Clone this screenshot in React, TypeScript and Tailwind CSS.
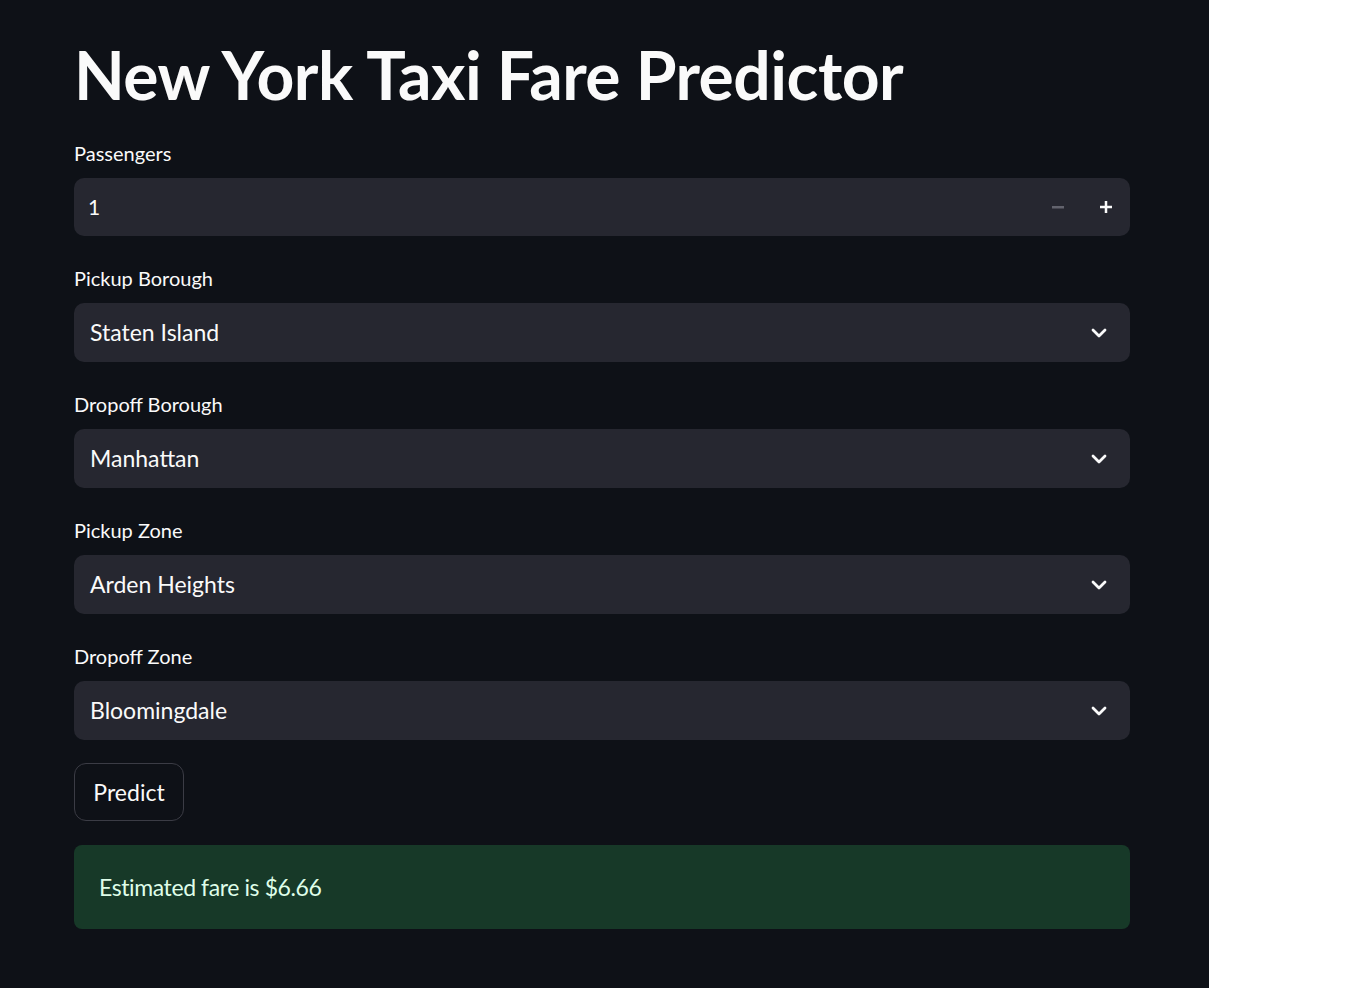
import React from 'react';

const font = { fontFamily: 'Lato, "Noto Sans", sans-serif' };

const Chevron = () => (
  <svg width="16" height="10" viewBox="0 0 16 10" fill="none">
    <path d="M2 2 L8 8 L14 2" stroke="#fafafa" strokeWidth="2.8" strokeLinecap="round" strokeLinejoin="round" />
  </svg>
);

const Label: React.FC<{ text: string }> = ({ text }) => (
  <div className="h-[30px] mb-[10px] flex items-center text-[20px] text-[#fafafa]">{text}</div>
);

const SelectField: React.FC<{ label: string; value: string }> = ({ label, value }) => (
  <div>
    <Label text={label} />
    <div className="h-[59px] rounded-[10px] bg-[#262730] flex items-center justify-between pl-4 pr-[23px]">
      <span className="text-[23px] text-[#fafafa]">{value}</span>
      <Chevron />
    </div>
  </div>
);

const NumberField: React.FC<{ label: string; value: string }> = ({ label, value }) => (
  <div>
    <Label text={label} />
    <div className="h-[58px] rounded-[10px] bg-[#262730] flex items-center justify-between pl-[14px] pr-[18px]">
      <span className="text-[21px] text-[#fafafa]">{value}</span>
      <div className="flex items-center gap-[36px]">
        <svg width="12" height="12" viewBox="0 0 12 12">
          <rect x="0" y="5" width="12" height="2.5" fill="#62636d" />
        </svg>
        <svg width="12" height="12" viewBox="0 0 12 12">
          <rect x="0" y="4.75" width="12" height="2.5" fill="#fafafa" />
          <rect x="4.75" y="0" width="2.5" height="12" fill="#fafafa" />
        </svg>
      </div>
    </div>
  </div>
);

export default function App() {
  return (
    <div className="flex min-h-[988px] bg-white" style={font}>
      <div className="w-[1209px] bg-[#0e1117] pl-[74px] pr-[79px] pt-[35px]">
        <h1 className="text-[66px] font-bold leading-[80px] text-[#fafafa] tracking-[-0.5px]">
          New York Taxi Fare Predictor
        </h1>
        <div className="mt-[23px] flex flex-col gap-[27px]">
          <NumberField label="Passengers" value="1" />
          <SelectField label="Pickup Borough" value="Staten Island" />
          <SelectField label="Dropoff Borough" value="Manhattan" />
          <SelectField label="Pickup Zone" value="Arden Heights" />
          <SelectField label="Dropoff Zone" value="Bloomingdale" />
        </div>
        <button className="mt-[23px] h-[58px] w-[110px] rounded-[12px] border border-[#3b3c45] bg-[#0e1117] text-[23px] text-[#fafafa]">
          Predict
        </button>
        <div className="mt-[24px] h-[84px] rounded-[8px] bg-[#173928] flex items-center px-[25px]">
          <span className="text-[23px] tracking-[-0.4px] text-[#dffde9]">Estimated fare is $6.66</span>
        </div>
      </div>
      <div className="flex-1" />
    </div>
  );
}
